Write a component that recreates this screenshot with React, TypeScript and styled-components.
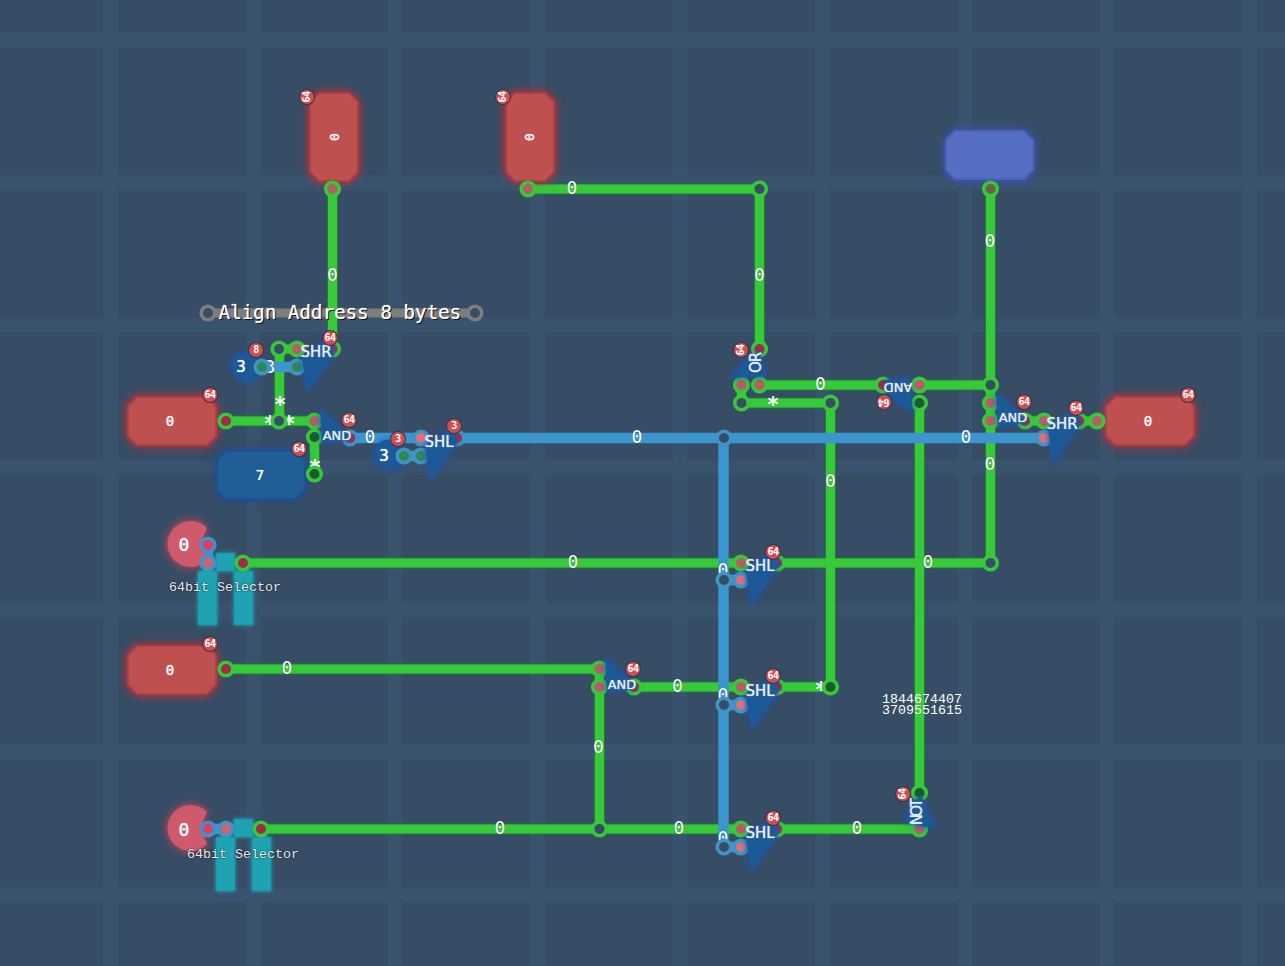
import React from "react";
import styled, { createGlobalStyle } from "styled-components";

const Global = createGlobalStyle`
  html, body { margin: 0; padding: 0; background: #374d65; overflow: hidden; }
`;

const Canvas = styled.main`
  position: relative;
  width: 1285px;
  height: 966px;
  overflow: hidden;
  background-color: #374d65;
  background-image:
    linear-gradient(to right, #39526e 15px, transparent 15px),
    linear-gradient(to bottom, #39526e 15px, transparent 15px);
  background-size: 142.4px 100%, 100% 142.4px;
  background-position: 103px 0, 0 33px;
  font-family: "DejaVu Sans Mono", monospace;
`;

const Layer = styled.svg`
  position: absolute;
  left: 0;
  top: 0;
  width: 1285px;
  height: 966px;
`;

const GreenEdge = styled.path`
  fill: none;
  stroke: #1f7d35;
  stroke-width: 11;
`;
const GreenCore = styled.path`
  fill: none;
  stroke: #37c93a;
  stroke-width: 9;
`;
const BlueWire = styled.path`
  fill: none;
  stroke: #3b96cf;
  stroke-width: 10.5;
`;
const GreyWire = styled.path`
  fill: none;
  stroke: #7d7d7d;
  stroke-width: 9;
`;

const chipFills: Record<string, [string, string, string]> = {
  red: ["#bf5050", "#ac4044", "#e0262a"],
  blue: ["#1f5f96", "#1c5098", "#1a4a9c"],
  violet: ["#566fc2", "#4c62bc", "#3f55d8"],
};

const Chip = styled.polygon<{ $tone: string }>`
  fill: ${(p) => chipFills[p.$tone][0]};
  stroke: ${(p) => chipFills[p.$tone][1]};
  stroke-width: 2;
  filter: drop-shadow(0 0 5px ${(p) => chipFills[p.$tone][2]});
`;

const Gate = styled.polygon`
  fill: #1c5a97;
  filter: drop-shadow(0 0 3px #1f4fc0);
`;

const Blob = styled.path`
  fill: #1c5a97;
  filter: drop-shadow(0 0 3px #1f4fc0);
`;

const Pie = styled.path`
  fill: #cf5a6c;
  filter: drop-shadow(0 0 4px #e0405a);
`;

const SelectorPart = styled.rect`
  fill: #1fa3b3;
  stroke: #1b8f9f;
  stroke-width: 1;
  filter: drop-shadow(0 0 2px rgba(31, 192, 208, 0.55));
`;

const pinInner: Record<string, string> = {
  hollow: "#374d65",
  green: "#1c5a30",
  pink: "#b85c68",
  red: "#a12c4a",
  brown: "#6f5d50",
  glow: "#dd6f7c",
  hot: "#e23c62",
  leaf: "#2e8a50",
  dim: "#cf6470",
};
const ringColors: Record<string, string> = {
  g: "#37c93a",
  b: "#3f93c6",
  s: "#7d7d7d",
};

const PinMark = styled.circle<{ $ring: string; $fill: string }>`
  fill: ${(p) => pinInner[p.$fill]};
  stroke: ${(p) => ringColors[p.$ring]};
  stroke-width: 3.6;
`;

const Placed = styled.span.attrs<{ $x: number; $y: number; $turn?: number }>((p) => ({
  style: {
    left: p.$x,
    top: p.$y,
    transform: `translate(-50%, -50%) rotate(${p.$turn ?? 0}deg)`,
  },
}))<{ $x: number; $y: number; $turn?: number }>`
  position: absolute;
  white-space: pre;
  color: #fff;
`;

const WireValue = styled(Placed)`
  font-size: 18px;
  line-height: 1;
  text-shadow: 0 0 1px rgba(20, 50, 40, 0.6);
`;

const WireMark = styled(Placed)`
  font-size: 21px;
  font-weight: 700;
  line-height: 1;
`;

const ChipValue = styled(Placed)<{ $size?: number }>`
  font-size: ${(p) => p.$size ?? 14}px;
  line-height: 1;
  text-shadow: 0 0 1px #fff;
`;

const GateName = styled(Placed)<{ $size: number; $squeeze?: number }>`
  font-family: "DejaVu Sans", sans-serif;
  font-size: ${(p) => p.$size}px;
  line-height: 1;
  letter-spacing: ${(p) => p.$squeeze ?? 0}px;
  color: #e6eef8;
  text-shadow: 0 0 1px #e6eef8;
`;

const Badge = styled(Placed)`
  width: 14px;
  height: 14px;
  border-radius: 50%;
  background: #d14d52;
  box-shadow: 0 0 0 1px #30384a;
  font-size: 10px;
  font-weight: 700;
  line-height: 14px;
  text-align: center;
  letter-spacing: -0.5px;
`;

const Title = styled(Placed)`
  font-size: 19.2px;
  line-height: 1;
  text-shadow: 1px 1px 0 #111, 0 0 1px #fff;
`;

const Caption = styled(Placed)`
  font-family: "Liberation Mono", monospace;
  font-size: 13.33px;
  line-height: 1;
  color: #e8edf2;
  text-shadow: 0 0 2px #000;
`;

const Readout = styled(Placed)`
  font-family: "Liberation Mono", monospace;
  font-size: 13.33px;
  line-height: 11px;
`;

const greenWires = [
  "M332.5 189V349",
  "M528 189H759.5V349",
  "M990.5 189V563H777",
  "M243 563H741",
  "M279.5 349V421M226 421H314M314.5 437V474M279 349H297",
  "M741.5 385V403H830.5V687H777",
  "M759 385H883M919 385H990",
  "M919.5 403V793",
  "M1025 421H1044M1079 421H1097",
  "M226 669H599.5V687",
  "M599.5 687V829",
  "M634 687H741",
  "M261 829H741M777 829H919",
];
const blueWires = [
  "M350 438H421",
  "M457 438H1044",
  "M723.5 438V847",
  "M404 456H421",
  "M262 367H297",
  "M724 580H741M724 705H741M724 847H741",
  "M208 545V563",
  "M208 829H226",
];

const chamfer = (x: number, y: number, w: number, h: number, c = 9) =>
  [
    [x + c, y],
    [x + w - c, y],
    [x + w, y + c],
    [x + w, y + h - c],
    [x + w - c, y + h],
    [x + c, y + h],
    [x, y + h - c],
    [x, y + c],
  ]
    .map((p) => p.join(","))
    .join(" ");

const chips = [
  { tone: "red", x: 128, y: 397, w: 88, h: 48 },
  { tone: "red", x: 128, y: 646, w: 88, h: 48 },
  { tone: "red", x: 1106, y: 397, w: 88, h: 48 },
  { tone: "red", x: 310, y: 93, w: 48, h: 88 },
  { tone: "red", x: 506, y: 93, w: 48, h: 88 },
  { tone: "blue", x: 217, y: 451, w: 88, h: 48 },
  { tone: "violet", x: 946, y: 131, w: 87, h: 48 },
];

const shift = (x: number, y: number) =>
  [
    [-14, 4],
    [15, -16],
    [18, 1],
    [-9, 39],
  ]
    .map(([a, b]) => `${a + x},${b + y}`)
    .join(" ");

const andShape = (x: number, y: number) =>
  [
    [-17, -26],
    [15, 4],
    [-15, 9],
  ]
    .map(([a, b]) => `${a + x},${b + y}`)
    .join(" ");

const gates = [
  shift(316, 353),
  shift(439, 442),
  shift(760, 566),
  shift(760, 691),
  shift(760, 833),
  shift(1062, 424),
  andShape(337, 435),
  andShape(622, 684),
  andShape(1013, 418),
  "730,378 748,357 759,352 767,376",
  "885,380 909,378 913,413 887,395",
  "905,822 912,801 922,797 935,828 920,826",
];

const pins: [number, number, string, string][] = [
  [332.5, 189, "g", "pink"], [528, 189, "g", "pink"], [759.5, 189, "g", "hollow"], [990.5, 189, "g", "brown"],
  [208, 313, "s", "hollow"], [475, 313, "s", "hollow"],
  [332.5, 349, "g", "red"], [279, 349, "g", "hollow"], [297, 349, "g", "pink"],
  [262, 367, "b", "leaf"], [297, 367, "b", "leaf"],
  [226, 421, "g", "red"], [279, 421, "g", "hollow"], [314.5, 421, "g", "pink"],
  [314.5, 437, "g", "green"], [314.5, 474, "g", "green"],
  [350, 438, "b", "red"], [421, 438, "b", "glow"], [457, 438, "b", "red"],
  [404, 456, "b", "leaf"], [421, 456, "b", "leaf"],
  [759.5, 349, "g", "red"], [741.5, 385, "g", "pink"], [759.5, 385, "g", "pink"],
  [741.5, 403, "g", "hollow"], [830.5, 403, "g", "hollow"],
  [883, 385, "g", "red"], [919.5, 385, "g", "pink"], [919.5, 403, "g", "green"],
  [990.5, 385, "g", "hollow"], [990.5, 403, "g", "pink"], [990.5, 421, "g", "pink"],
  [1025, 421, "g", "red"], [1044, 421, "g", "pink"], [1079, 421, "g", "red"], [1097, 421, "g", "pink"],
  [1044, 438, "b", "glow"], [724, 438, "b", "hollow"],
  [208, 545, "b", "hot"], [208, 563, "b", "dim"], [243, 563, "g", "red"],
  [741, 563, "g", "pink"], [777, 563, "g", "red"], [990.5, 563, "g", "hollow"],
  [724, 580, "b", "hollow"], [741, 580, "b", "glow"],
  [226, 669, "g", "red"], [599.5, 669, "g", "pink"], [599.5, 687, "g", "pink"], [634, 687, "g", "red"],
  [741, 687, "g", "pink"], [777, 687, "g", "red"], [830.5, 687, "g", "green"],
  [724, 705, "b", "hollow"], [741, 705, "b", "glow"],
  [208, 829, "b", "hot"], [226, 829, "b", "dim"], [261, 829, "g", "red"], [599.5, 829, "g", "hollow"],
  [741, 829, "g", "pink"], [777, 829, "g", "red"], [919.5, 829, "g", "pink"], [919.5, 793, "g", "green"],
  [724, 847, "b", "hollow"], [741, 847, "b", "glow"],
];

const wireValues: [string, number, number][] = [
  ["0", 332.5, 275], ["0", 572, 188], ["0", 759.5, 275], ["0", 990, 241], ["0", 990, 464],
  ["0", 820.5, 384], ["0", 830.5, 481], ["0", 637, 437], ["0", 966, 437], ["0", 370, 437],
  ["0", 573, 562], ["0", 928, 562], ["0", 723, 570], ["0", 287, 668], ["0", 677.5, 686],
  ["0", 723, 695], ["0", 598.5, 747], ["0", 500, 828], ["0", 679, 828], ["0", 857, 828],
  ["0", 723, 838], ["3", 270, 367],
];

const wireMarks: [number, number][] = [
  [280, 405], [270, 424], [289, 424], [773, 405], [315, 468], [821, 690],
];

const badges: [number, number, string, number?][] = [
  [210, 395, "64"], [330, 338, "64"], [256, 350, "8"], [349, 420, "64"], [299, 449, "64"],
  [398, 439, "3"], [454, 426, "3"], [307, 97, "64", -90], [503, 97, "64", -90],
  [741, 350, "64", -90], [884, 402, "64", 180], [1024, 402, "64"], [1076, 408, "64"], [1188, 395, "64"],
  [773, 552, "64"], [773, 676, "64"], [633, 669, "64"], [210, 644, "64"], [773, 818, "64"],
  [903, 794, "64", -90],
];

const gateNames: [string, number, number, number, number?, number?][] = [
  ["SHR", 316, 352, 15, 0, 0],
  ["AND", 337, 435, 13, 0, 0],
  ["SHL", 439, 442, 15, 0, 0],
  ["OR", 756, 363, 15, -90, -1],
  ["AND", 898, 387, 13, 180, 0],
  ["AND", 1013, 417, 13, 0, 0],
  ["SHR", 1062, 424, 15, 0, 0],
  ["SHL", 760, 566, 15, 0, 0],
  ["AND", 622, 684, 13, 0, 0],
  ["SHL", 760, 691, 15, 0, 0],
  ["SHL", 760, 833, 15, 0, 0],
  ["NOT", 917, 813, 15, -90, -2.5],
];

const chipValues: [string, number, number, number?, number?][] = [
  ["0", 170, 421], ["0", 170, 670], ["0", 1148, 421],
  ["0", 334, 137, 13, -90], ["0", 529, 137, 13, -90],
  ["7", 260, 475],
  ["0", 184, 545, 18], ["0", 184, 830, 18],
  ["3", 241, 367, 16], ["3", 384, 456, 16],
];

const piePath = (cx: number, cy: number) =>
  `M${cx + 12} ${cy} L${cx + 19} ${cy - 16} A23 23 0 1 0 ${cx + 19} ${cy + 16} Z`;

const blobPath = (cx: number, cy: number) =>
  `M${cx - 13} ${cy - 4} C${cx - 8} ${cy - 8} ${cx - 8} ${cy - 15} ${cx + 2} ${cy - 15}
   C${cx + 9} ${cy - 15} ${cx + 14} ${cy - 9} ${cx + 17} ${cy - 2}
   C${cx + 17} ${cy + 8} ${cx + 11} ${cy + 15} ${cx + 4} ${cy + 15}
   C${cx - 6} ${cy + 15} ${cx - 10} ${cy + 6} ${cx - 13} ${cy - 4} Z`;

const Selector = ({ x, y }: { x: number; y: number }) => (
  <>
    <SelectorPart x={x + 18} y={y} width={19} height={18} rx={1} />
    <SelectorPart x={x} y={y + 18} width={19} height={54} rx={1} />
    <SelectorPart x={x + 36} y={y + 18} width={19} height={54} rx={1} />
  </>
);

export default function App() {
  return (
    <Canvas>
      <Global />
      <Layer viewBox="0 0 1285 966">
        <GreyWire d="M208 313H475" />
        {greenWires.map((d) => (
          <GreenEdge key={d} d={d} />
        ))}
        {greenWires.map((d) => (
          <GreenCore key={d} d={d} />
        ))}
        {blueWires.map((d) => (
          <BlueWire key={d} d={d} />
        ))}
        {chips.map((c) => (
          <Chip key={`${c.x}-${c.y}`} $tone={c.tone} points={chamfer(c.x, c.y, c.w, c.h)} />
        ))}
        <Selector x={198} y={553} />
        <Selector x={216} y={819} />
        <Pie d={piePath(188, 544)} />
        <Pie d={piePath(188, 828)} />
        <Blob d={blobPath(243, 367)} />
        <Blob d={blobPath(386, 455)} />
      </Layer>

      {wireValues.map(([t, x, y]) => (
        <WireValue key={`${x}-${y}`} $x={x} $y={y}>
          {t}
        </WireValue>
      ))}
      {wireMarks.map(([x, y]) => (
        <WireMark key={`${x}-${y}`} $x={x} $y={y}>
          *
        </WireMark>
      ))}

      <Layer viewBox="0 0 1285 966">
        {pins.map(([x, y, ring, fill]) => (
          <PinMark key={`${x}-${y}`} cx={x} cy={y} r={6.8} $ring={ring} $fill={fill} />
        ))}
        {gates.map((pts) => (
          <Gate key={pts} points={pts} />
        ))}
      </Layer>

      <Title $x={340} $y={313}>Align Address 8 bytes</Title>
      {chipValues.map(([t, x, y, size, turn]) => (
        <ChipValue key={`${x}-${y}`} $x={x} $y={y} $size={size} $turn={turn}>
          {t}
        </ChipValue>
      ))}
      {gateNames.map(([t, x, y, size, turn, squeeze]) => (
        <GateName key={`${x}-${y}`} $x={x} $y={y} $size={size} $turn={turn} $squeeze={squeeze}>
          {t}
        </GateName>
      ))}
      {badges.map(([x, y, t, turn]) => (
        <Badge key={`${x}-${y}`} $x={x} $y={y} $turn={turn}>
          {t}
        </Badge>
      ))}
      <Caption $x={225} $y={588}>64bit Selector</Caption>
      <Caption $x={243} $y={855}>64bit Selector</Caption>
      <Readout $x={922} $y={705}>{"1844674407\n3709551615"}</Readout>
    </Canvas>
  );
}
